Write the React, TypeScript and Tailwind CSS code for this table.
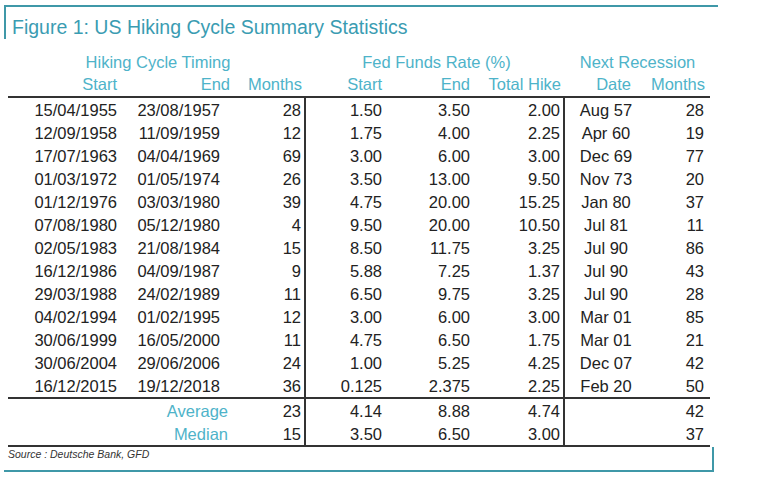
const rows = [
  ["15/04/1955", "23/08/1957", "28", "1.50", "3.50", "2.00", "Aug 57", "28"],
  ["12/09/1958", "11/09/1959", "12", "1.75", "4.00", "2.25", "Apr 60", "19"],
  ["17/07/1963", "04/04/1969", "69", "3.00", "6.00", "3.00", "Dec 69", "77"],
  ["01/03/1972", "01/05/1974", "26", "3.50", "13.00", "9.50", "Nov 73", "20"],
  ["01/12/1976", "03/03/1980", "39", "4.75", "20.00", "15.25", "Jan 80", "37"],
  ["07/08/1980", "05/12/1980", "4", "9.50", "20.00", "10.50", "Jul 81", "11"],
  ["02/05/1983", "21/08/1984", "15", "8.50", "11.75", "3.25", "Jul 90", "86"],
  ["16/12/1986", "04/09/1987", "9", "5.88", "7.25", "1.37", "Jul 90", "43"],
  ["29/03/1988", "24/02/1989", "11", "6.50", "9.75", "3.25", "Jul 90", "28"],
  ["04/02/1994", "01/02/1995", "12", "3.00", "6.00", "3.00", "Mar 01", "85"],
  ["30/06/1999", "16/05/2000", "11", "4.75", "6.50", "1.75", "Mar 01", "21"],
  ["30/06/2004", "29/06/2006", "24", "1.00", "5.25", "4.25", "Dec 07", "42"],
  ["16/12/2015", "19/12/2018", "36", "0.125", "2.375", "2.25", "Feb 20", "50"],
];

const summary = [
  ["Average", "23", "4.14", "8.88", "4.74", "42"],
  ["Median", "15", "3.50", "6.50", "3.00", "37"],
];

const grid = "grid grid-cols-[117px_107px_74px_84px_86px_89px_80px_65px] w-[702px] h-[23px] items-center";

export default function App() {
  return (
    <div
      className="w-[764px] h-[481px] bg-white pt-[5px] pl-[4px] text-[#222]"
      style={{ fontFamily: '"Liberation Sans", Arial, sans-serif' }}
    >
      {/* top bracket + title */}
      <div className="w-[714px] h-[34px] border-t-[2px] border-l-[2px] border-[#3f98a8]">
        <div className="pl-[6px] pt-[9px] text-[19.5px] leading-[22px] text-[#3a9cb2]">
          Figure 1: US Hiking Cycle Summary Statistics
        </div>
      </div>

      <div className="pl-[4px] mt-[11px] text-[16.5px] leading-[20px]">
        {/* group headers */}
        <div className={`${grid} text-[#4eb3c9]`}>
          <div className="col-span-2 text-center pl-[76px]">Hiking Cycle Timing</div>
          <div />
          <div className="col-span-3 text-center pl-[2px]">Fed Funds Rate (%)</div>
          <div className="col-span-2 text-center">Next Recession</div>
        </div>
        <div className={`${grid} text-[#4eb3c9] border-b-2 border-[#333] h-[25px] pb-[2px]`}>
          <div className="text-right pr-[8px]">Start</div>
          <div className="text-right pr-[2px]">End</div>
          <div className="text-right pr-[4px]">Months</div>
          <div className="text-right pr-[8px]">Start</div>
          <div className="text-right pr-[6px]">End</div>
          <div className="text-right pr-[4px]">Total Hike</div>
          <div className="text-right pr-[14px]">Date</div>
          <div className="text-right pr-[5px]">Months</div>
        </div>

        {/* data */}
        <div className="border-b-2 border-[#333] w-[702px]">
          {rows.map((r, i) => (
            <div key={i} className={grid}>
              <div className="text-right pr-[8px]">{r[0]}</div>
              <div className="text-right pr-[12px]">{r[1]}</div>
              <div className="text-right pr-[3px] h-full flex items-center justify-end border-r-2 border-[#333]">{r[2]}</div>
              <div className="text-right pr-[8px]">{r[3]}</div>
              <div className="text-right pr-[6px]">{r[4]}</div>
              <div className="text-right pr-[3px] h-full flex items-center justify-end border-r-2 border-[#333]">{r[5]}</div>
              <div className="text-center pl-[2px]">{r[6]}</div>
              <div className="text-right pr-[6px]">{r[7]}</div>
            </div>
          ))}
        </div>

        <div className="border-b-2 border-[#333] w-[702px]">
          {summary.map((s) => (
            <div key={s[0]} className={grid}>
              <div className="col-span-2 text-right pr-[4px] text-[#4eb3c9]">{s[0]}</div>
              <div className="text-right pr-[3px] h-full flex items-center justify-end border-r-2 border-[#333]">{s[1]}</div>
              <div className="text-right pr-[8px]">{s[2]}</div>
              <div className="text-right pr-[6px]">{s[3]}</div>
              <div className="text-right pr-[3px] h-full flex items-center justify-end border-r-2 border-[#333]">{s[4]}</div>
              <div />
              <div className="text-right pr-[6px]">{s[5]}</div>
            </div>
          ))}
        </div>
      </div>

      {/* bottom bracket + source */}
      <div className="w-[710px] h-[25px] border-b-[2px] border-r-[2px] border-[#3f98a8]">
        <div className="pl-[4px] pt-[1px] text-[10.5px] leading-[13px] italic text-[#333]">
          Source : Deutsche Bank, GFD
        </div>
      </div>
    </div>
  );
}
